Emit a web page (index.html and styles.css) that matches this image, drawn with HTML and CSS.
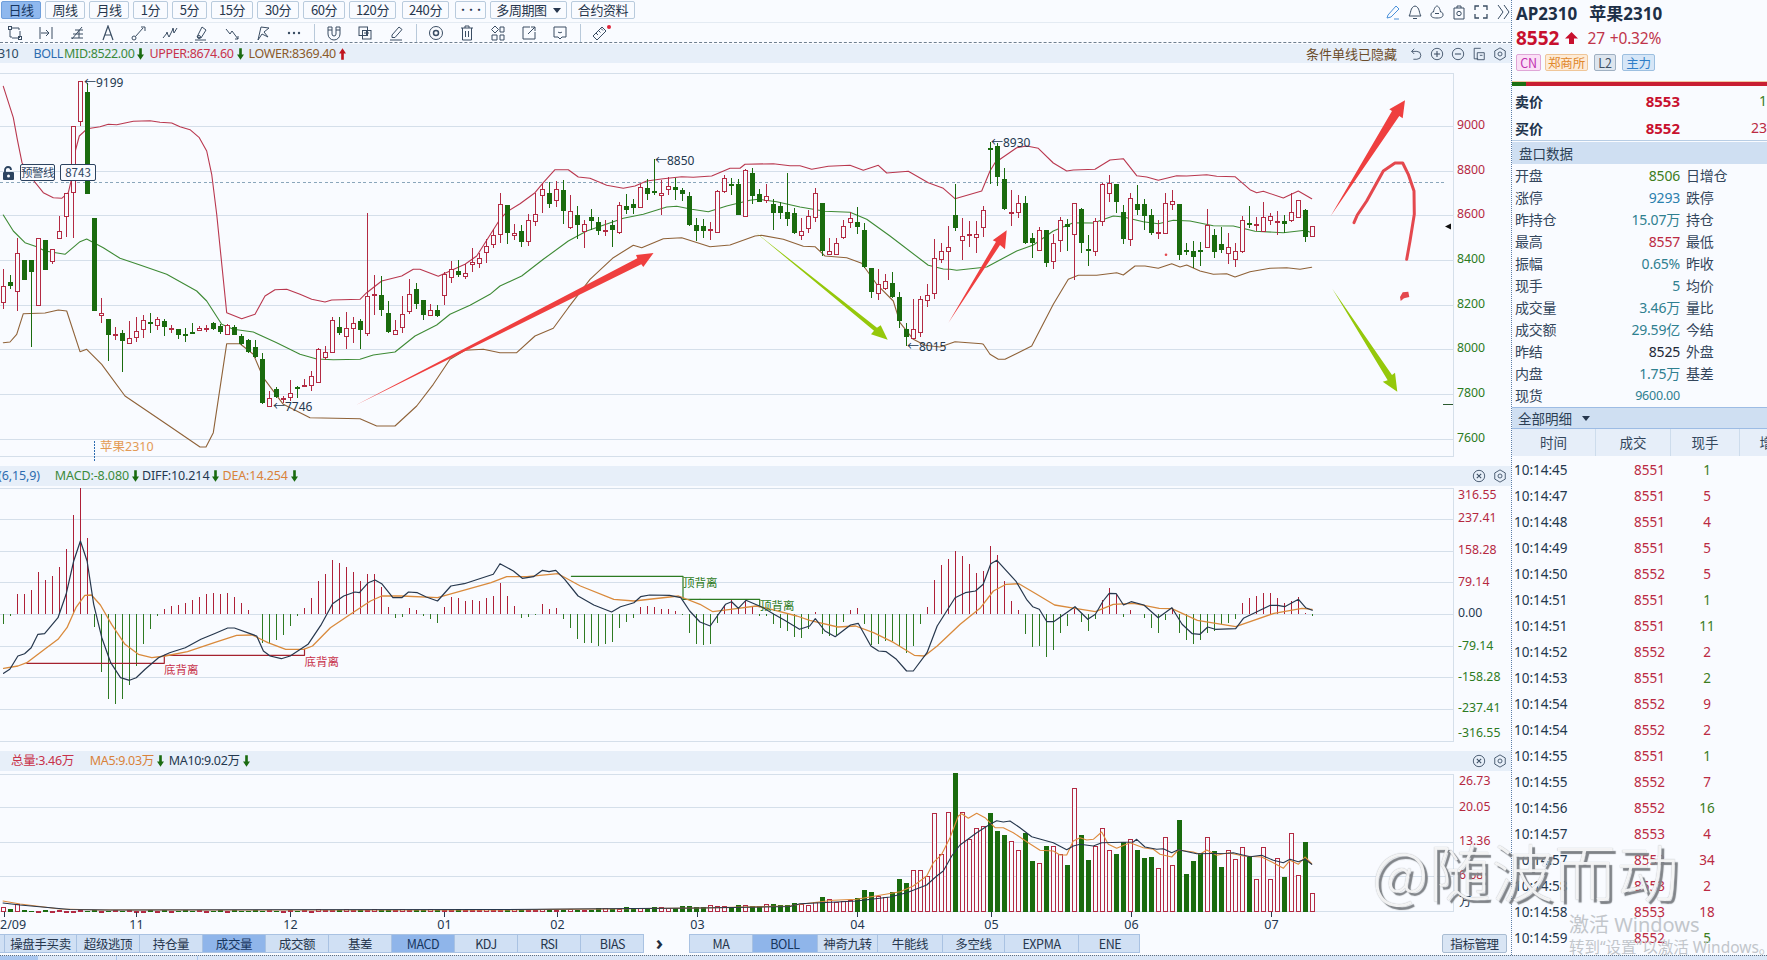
FILE: index.html
```html
<!DOCTYPE html>
<html lang="zh">
<head>
<meta charset="utf-8">
<title>AP2310 苹果2310</title>
<link rel="stylesheet" href="styles.css">
</head>
<body>
<svg class="defs" width="0" height="0">
  <symbol id="i-node" viewBox="0 0 16 16"><path d="M4 3h8v2M3 4v8h2M5 13h7l1-1V6" fill="none" stroke="currentColor"/><rect x="1.5" y="1.5" width="3" height="3" fill="none" stroke="currentColor"/><rect x="11.5" y="11.5" width="3" height="3" fill="none" stroke="currentColor"/></symbol>
  <symbol id="i-hline" viewBox="0 0 16 16"><path d="M2 2v12M14 2v12M3 8h8M8 5l3 3-3 3" fill="none" stroke="currentColor"/></symbol>
  <symbol id="i-fib" viewBox="0 0 16 16"><path d="M3 14L13 2M6 5h8M4 9h10M2 13h12M10 5v8" fill="none" stroke="currentColor"/></symbol>
  <symbol id="i-a" viewBox="0 0 16 16"><path d="M3 15L8 1l5 14M5 10h6" fill="none" stroke="currentColor" stroke-width="1.2"/></symbol>
  <symbol id="i-line" viewBox="0 0 16 16"><path d="M4.500 11.500L12 3" fill="none" stroke="currentColor"/><circle cx="3" cy="13" r="2" fill="none" stroke="currentColor"/><path d="M10 2h4v4" fill="none" stroke="currentColor"/></symbol>
  <symbol id="i-wave" viewBox="0 0 16 16"><path d="M1 13l4-5 2 4 4-8 1 4 3-5" fill="none" stroke="currentColor"/><circle cx="5" cy="8" r="1" fill="currentColor"/><circle cx="11" cy="4" r="1" fill="currentColor"/></symbol>
  <symbol id="i-brush" viewBox="0 0 16 16"><path d="M4 12L9 2l4 3-5 8zM2 15h11" fill="none" stroke="currentColor"/><circle cx="6" cy="12" r="1.500" fill="none" stroke="currentColor"/></symbol>
  <symbol id="i-zig" viewBox="0 0 16 16"><path d="M2 4l4 5 2-3 6 8M11 14h3v-3" fill="none" stroke="currentColor"/></symbol>
  <symbol id="i-flag" viewBox="0 0 16 16"><path d="M3 15L6 2l8 1-5 4 4 5-6-3z" fill="none" stroke="currentColor"/></symbol>
  <symbol id="i-dots" viewBox="0 0 16 16"><circle cx="3" cy="8" r="1.200" fill="currentColor"/><circle cx="8" cy="8" r="1.200" fill="currentColor"/><circle cx="13" cy="8" r="1.200" fill="currentColor"/></symbol>
  <symbol id="i-magnet" viewBox="0 0 16 16"><path d="M2 2h4v7a2 2 0 0 0 4 0V2h4v7a6 6 0 0 1-12 0zM2 5h4M10 5h4" fill="none" stroke="currentColor"/></symbol>
  <symbol id="i-layer" viewBox="0 0 16 16"><rect x="2" y="2" width="8.500" height="8.500" fill="none" stroke="currentColor"/><rect x="5.500" y="5.500" width="8.500" height="8.500" fill="none" stroke="currentColor"/><path d="M7 8h5M9.500 6v5" stroke="currentColor"/></symbol>
  <symbol id="i-pen" viewBox="0 0 16 16"><path d="M4 10L11 2l3 2.500-7 8H4zM2 15h12" fill="none" stroke="currentColor"/></symbol>
  <symbol id="i-eye" viewBox="0 0 16 16"><circle cx="8" cy="8" r="6.500" fill="none" stroke="currentColor"/><circle cx="8" cy="8" r="2.500" fill="none" stroke="currentColor" stroke-width="1.500"/></symbol>
  <symbol id="i-trash" viewBox="0 0 16 16"><path d="M2 3h12M6 3V1h4v2M3.500 3v12h9V3M6.500 6v6M9.500 6v6" fill="none" stroke="currentColor"/></symbol>
  <symbol id="i-grid" viewBox="0 0 16 16"><path d="M5 1l3.500 3.500L5 8 1.500 4.500zM10 2h4v5h-4zM2 10h5v5H2zM10 10h4v5h-4z" fill="none" stroke="currentColor"/></symbol>
  <symbol id="i-out" viewBox="0 0 16 16"><path d="M9 2H2v12h12V7M7 9l7-7M10 2h4v4" fill="none" stroke="currentColor"/></symbol>
  <symbol id="i-chat" viewBox="0 0 16 16"><path d="M2 2h12v10h-4l-2 2-2-2H2zM6 7c1 1 3 1 4 0" fill="none" stroke="currentColor"/></symbol>
  <symbol id="i-ruler" viewBox="0 0 16 16"><path d="M1 11L10 2l4 4-9 9zM4 8l2 2M6.500 5.500l2 2M9 3.500l2 2" fill="none" stroke="currentColor"/></symbol>
  <symbol id="i-edit" viewBox="0 0 16 16"><path d="M3 11l8-9 3 3-8 8-4 1zM9 15h5" fill="none" stroke="currentColor"/></symbol>
  <symbol id="i-bell" viewBox="0 0 16 16"><path d="M2 12c2-2 1-9 6-10 5 1 4 8 6 10zM6 14.500h4" fill="none" stroke="currentColor"/></symbol>
  <symbol id="i-cloud" viewBox="0 0 16 16"><path d="M2 11c0-3 2-3 2.500-3C5 4 7 2 8 2s3 2 3.500 6c.5 0 2.500 0 2.500 3 0 2-2 3-6 3s-6-1-6-3zM6 9.500h4" fill="none" stroke="currentColor"/></symbol>
  <symbol id="i-shot" viewBox="0 0 16 16"><path d="M3 4h10v11H3zM6 4V2h4v2" fill="none" stroke="currentColor"/><circle cx="8" cy="9.500" r="2.200" fill="none" stroke="currentColor"/></symbol>
  <symbol id="i-full" viewBox="0 0 16 16"><path d="M2 6V2h4M10 2h4v4M14 10v4h-4M6 14H2v-4" fill="none" stroke="currentColor" stroke-width="1.300"/></symbol>
  <symbol id="i-more" viewBox="0 0 16 16"><path d="M3 1l5 7-5 7M9 1l5 7-5 7" fill="none" stroke="currentColor"/></symbol>
  <symbol id="i-undo" viewBox="0 0 16 16"><path d="M6 2L3 5l3 3M3 5h6a4 4 0 0 1 0 9H5" fill="none" stroke="currentColor"/></symbol>
  <symbol id="i-plus" viewBox="0 0 16 16"><circle cx="8" cy="8" r="6.500" fill="none" stroke="currentColor"/><path d="M4.500 8h7M8 4.500v7" stroke="currentColor" stroke-width="1.200"/></symbol>
  <symbol id="i-minus" viewBox="0 0 16 16"><circle cx="8" cy="8" r="6.500" fill="none" stroke="currentColor"/><path d="M4.500 8h7" stroke="currentColor" stroke-width="1.200"/></symbol>
  <symbol id="i-copy" viewBox="0 0 16 16"><path d="M10 1.500H2.500v12H7M6 6.500h8v8H6z" fill="none" stroke="currentColor"/><path d="M9 9.500h3" stroke="currentColor"/></symbol>
  <symbol id="i-gear" viewBox="0 0 16 16"><path d="M8 1l6 3.500v7L8 15l-6-3.500v-7z" fill="none" stroke="currentColor"/><circle cx="8" cy="8" r="2.300" fill="none" stroke="currentColor"/></symbol>
  <symbol id="i-close" viewBox="0 0 16 16"><circle cx="8" cy="8" r="6.500" fill="none" stroke="currentColor"/><path d="M5.500 5.500l5 5M10.500 5.500l-5 5" stroke="currentColor" stroke-width="1.200"/></symbol>
  <symbol id="i-up" viewBox="0 0 8 13"><path d="M4 0l4 6H5.500v7h-3V6H0z" fill="currentColor"/></symbol>
  <symbol id="i-up-bold" viewBox="0 0 13 12"><path d="M6.500 0L13 6.500H9V12H4V6.500H0z" fill="currentColor"/></symbol>
  <symbol id="i-down" viewBox="0 0 8 13"><path d="M4 13L0 7h2.500V0h3v7H8z" fill="currentColor"/></symbol>
  <symbol id="i-lock" viewBox="0 0 13 14"><path d="M3 6V4a3 3 0 0 1 6 0" fill="none" stroke="currentColor" stroke-width="1.800"/><rect x="1" y="6" width="11" height="8" rx="1" fill="currentColor"/><circle cx="6.500" cy="10" r="1.500" fill="#f9fbff"/></symbol>
</svg>

<div class="app">
  <div class="main">
    <section class="left">
      <div class="periods">
        <button class="btn w41 on">日线</button>
        <button class="btn w41">周线</button>
        <button class="btn w41">月线</button>
        <button class="btn w35">1分</button>
        <button class="btn w35">5分</button>
        <button class="btn w42">15分</button>
        <button class="btn w42">30分</button>
        <button class="btn w42">60分</button>
        <button class="btn w47">120分</button>
        <button class="btn w47">240分</button>
        <button class="btn w31 strong">•••</button>
        <button class="btn w76">多周期图<span class="caret"></span></button>
        <button class="btn w64">合约资料</button>
        <div class="top-tools">
          <svg class="ic ic-blue"><use href="#i-edit"/></svg>
          <svg class="ic"><use href="#i-bell"/></svg>
          <svg class="ic"><use href="#i-cloud"/></svg>
          <svg class="ic"><use href="#i-shot"/></svg>
          <svg class="ic"><use href="#i-full"/></svg>
          <svg class="ic"><use href="#i-more"/></svg>
        </div>
      </div>
      <div class="draw-tools">
        <svg class="ic"><use href="#i-node"/></svg>
        <svg class="ic"><use href="#i-hline"/></svg>
        <svg class="ic"><use href="#i-fib"/></svg>
        <svg class="ic"><use href="#i-a"/></svg>
        <svg class="ic"><use href="#i-line"/></svg>
        <svg class="ic"><use href="#i-wave"/></svg>
        <svg class="ic"><use href="#i-brush"/></svg>
        <svg class="ic"><use href="#i-zig"/></svg>
        <svg class="ic"><use href="#i-flag"/></svg>
        <svg class="ic"><use href="#i-dots"/></svg>
        <i class="sep"></i>
        <svg class="ic"><use href="#i-magnet"/></svg>
        <svg class="ic"><use href="#i-layer"/></svg>
        <svg class="ic"><use href="#i-pen"/></svg>
        <i class="sep"></i>
        <svg class="ic"><use href="#i-eye"/></svg>
        <svg class="ic"><use href="#i-trash"/></svg>
        <svg class="ic"><use href="#i-grid"/></svg>
        <svg class="ic"><use href="#i-out"/></svg>
        <svg class="ic"><use href="#i-chat"/></svg>
        <i class="sep"></i>
        <span class="ruler"><svg class="ic"><use href="#i-ruler"/></svg><i class="red-dot"></i></span>
      </div>

      <div class="legend boll">
        <span class="c-dark clip3">310</span>
        <span class="c-blue m17">BOLL</span>
        <span class="c-green m2">MID:8522.00</span><svg class="ar c-dgreen"><use href="#i-down"/></svg>
        <span class="c-red m5">UPPER:8674.60</span><svg class="ar c-dgreen"><use href="#i-down"/></svg>
        <span class="c-brown m5">LOWER:8369.40</span><svg class="ar c-dred"><use href="#i-up"/></svg>
        <div class="legend-right">
          <span class="c-hide">条件单线已隐藏</span>
          <svg class="ic sm"><use href="#i-undo"/></svg>
          <svg class="ic sm"><use href="#i-plus"/></svg>
          <svg class="ic sm"><use href="#i-minus"/></svg>
          <svg class="ic sm"><use href="#i-copy"/></svg>
          <svg class="ic sm"><use href="#i-gear"/></svg>
        </div>
      </div>
      <div class="panel p-main">
        <svg id="priceChart" class="chart" width="1511" height="403" viewBox="0 62 1511 403"></svg>
        <div class="alert">
          <svg class="lock"><use href="#i-lock"/></svg>
          <span class="alert-box w35b">预警线</span>
          <span class="alert-box w36b">8743</span>
        </div>
      </div>

      <div class="legend macd">
        <span class="c-blue clip">(6,15,9)</span>
        <span class="c-green m15">MACD:-8.080</span><svg class="ar c-dgreen"><use href="#i-down"/></svg>
        <span class="c-navy m3">DIFF:10.214</span><svg class="ar c-dgreen"><use href="#i-down"/></svg>
        <span class="c-orange m3">DEA:14.254</span><svg class="ar c-dgreen"><use href="#i-down"/></svg>
        <div class="legend-right">
          <svg class="ic sm"><use href="#i-close"/></svg>
          <svg class="ic sm"><use href="#i-gear"/></svg>
        </div>
      </div>
      <div class="panel p-macd">
        <svg id="macdChart" class="chart" width="1511" height="265" viewBox="0 485 1511 265"></svg>
      </div>

      <div class="legend vol">
        <span class="c-red m11">总量:3.46万</span>
        <span class="c-orange m16">MA5:9.03万</span><svg class="ar c-dgreen"><use href="#i-down"/></svg>
        <span class="c-navy m4">MA10:9.02万</span><svg class="ar c-dgreen"><use href="#i-down"/></svg>
        <div class="legend-right">
          <svg class="ic sm"><use href="#i-close"/></svg>
          <svg class="ic sm"><use href="#i-gear"/></svg>
        </div>
      </div>
      <div class="panel p-vol">
        <svg id="volChart" class="chart" width="1511" height="163" viewBox="0 770 1511 163"></svg>
      </div>

      <div class="tabbar">
        <div class="tabs first">
          <span class="tab t5"></span>
          <span class="tab t72">操盘手买卖</span>
          <span class="tab t63">超级逃顶</span>
          <span class="tab t63">持仓量</span>
          <span class="tab t63 on">成交量</span>
          <span class="tab t63">成交额</span>
          <span class="tab t63">基差</span>
          <span class="tab t63 on">MACD</span>
          <span class="tab t63">KDJ</span>
          <span class="tab t63">RSI</span>
          <span class="tab t63">BIAS</span>
        </div>
        <span class="chev">›</span>
        <div class="tabs second">
          <span class="tab t63">MA</span>
          <span class="tab t65 on">BOLL</span>
          <span class="tab t60">神奇九转</span>
          <span class="tab t65">牛能线</span>
          <span class="tab t62">多空线</span>
          <span class="tab t74">EXPMA</span>
          <span class="tab t62">ENE</span>
        </div>
        <button class="btn manage">指标管理</button>
      </div>
    </section>

    <aside class="right">
      <header class="quote">
        <div class="q-name"><span>AP2310</span><span>苹果2310</span></div>
        <div class="q-price">
          <b>8552</b><svg class="q-up"><use href="#i-up-bold"/></svg><span>27</span><span>+0.32%</span>
        </div>
        <div class="q-tags">
          <span class="tag tag-pink">CN</span>
          <span class="tag tag-orange">郑商所</span>
          <span class="tag tag-grey">L2</span>
          <span class="tag tag-blue">主力</span>
        </div>
      </header>
      <div class="ratio"><i></i></div>
      <div class="bidask">
        <div class="ba"><b>卖价</b><b class="ba-p">8553</b><span class="ba-q c-tgreen">1</span></div>
        <div class="ba"><b>买价</b><b class="ba-p">8552</b><span class="ba-q c-tred">23</span></div>
      </div>
      <div class="sec-head">盘口数据</div>
      <div class="stats">
        <div class="stat"><span class="k">开盘</span><span class="v c-tgreen">8506</span><span class="k2">日增仓</span></div>
        <div class="stat"><span class="k">涨停</span><span class="v c-tblue">9293</span><span class="k2">跌停</span></div>
        <div class="stat"><span class="k">昨持仓</span><span class="v c-teal">15.07万</span><span class="k2">持仓</span></div>
        <div class="stat"><span class="k">最高</span><span class="v c-tred">8557</span><span class="k2">最低</span></div>
        <div class="stat"><span class="k">振幅</span><span class="v c-teal">0.65%</span><span class="k2">昨收</span></div>
        <div class="stat"><span class="k">现手</span><span class="v c-teal">5</span><span class="k2">均价</span></div>
        <div class="stat"><span class="k">成交量</span><span class="v c-teal">3.46万</span><span class="k2">量比</span></div>
        <div class="stat"><span class="k">成交额</span><span class="v c-teal">29.59亿</span><span class="k2">今结</span></div>
        <div class="stat"><span class="k">昨结</span><span class="v c-black">8525</span><span class="k2">外盘</span></div>
        <div class="stat"><span class="k">内盘</span><span class="v c-teal">1.75万</span><span class="k2">基差</span></div>
        <div class="stat"><span class="k">现货</span><span class="v c-teal small">9600.00</span></div>
      </div>
      <div class="detail-head">全部明细<span class="caret"></span></div>
      <div class="th">
        <span class="th1">时间</span><span class="th2">成交</span><span class="th3">现手</span><span class="th4">增仓</span>
      </div>
      <div class="ticks">
        <div class="tr"><span class="t">10:14:45</span><span class="p">8551</span><span class="q c-tgreen">1</span></div>
        <div class="tr"><span class="t">10:14:47</span><span class="p">8551</span><span class="q c-tred">5</span></div>
        <div class="tr"><span class="t">10:14:48</span><span class="p">8551</span><span class="q c-tred">4</span></div>
        <div class="tr"><span class="t">10:14:49</span><span class="p">8551</span><span class="q c-tred">5</span></div>
        <div class="tr"><span class="t">10:14:50</span><span class="p">8552</span><span class="q c-tred">5</span></div>
        <div class="tr"><span class="t">10:14:51</span><span class="p">8551</span><span class="q c-tgreen">1</span></div>
        <div class="tr"><span class="t">10:14:51</span><span class="p">8551</span><span class="q c-tgreen">11</span></div>
        <div class="tr"><span class="t">10:14:52</span><span class="p">8552</span><span class="q c-tred">2</span></div>
        <div class="tr"><span class="t">10:14:53</span><span class="p">8551</span><span class="q c-tgreen">2</span></div>
        <div class="tr"><span class="t">10:14:54</span><span class="p">8552</span><span class="q c-tred">9</span></div>
        <div class="tr"><span class="t">10:14:54</span><span class="p">8552</span><span class="q c-tred">2</span></div>
        <div class="tr"><span class="t">10:14:55</span><span class="p">8551</span><span class="q c-tgreen">1</span></div>
        <div class="tr"><span class="t">10:14:55</span><span class="p">8552</span><span class="q c-tred">7</span></div>
        <div class="tr"><span class="t">10:14:56</span><span class="p">8552</span><span class="q c-tgreen">16</span></div>
        <div class="tr"><span class="t">10:14:57</span><span class="p">8553</span><span class="q c-tred">4</span></div>
        <div class="tr"><span class="t">10:14:57</span><span class="p">8553</span><span class="q c-tred">34</span></div>
        <div class="tr"><span class="t">10:14:58</span><span class="p">8553</span><span class="q c-tred">2</span></div>
        <div class="tr"><span class="t">10:14:58</span><span class="p">8553</span><span class="q c-tred">18</span></div>
        <div class="tr"><span class="t">10:14:59</span><span class="p">8552</span><span class="q c-tgreen">5</span></div>
      </div>
    </aside>
  </div>
  <footer class="status"><i class="st-on"></i><i class="st-a"></i><i class="st-b"></i></footer>

  <div class="watermark">@随波而动</div>
  <div class="activate"><p class="a1">激活 Windows</p><p class="a2">转到“设置”以激活 Windows。</p></div>
</div>
<script src="chart.js"></script>
</body>
</html>
```

FILE: styles.css
```css
* { box-sizing: border-box; }
html, body { margin: 0; padding: 0; height: 100%; overflow: hidden; }
body {
  background: #f9fbff;
  color: #26364d;
  font-family: "Noto Sans", "Noto Sans CJK SC", "Liberation Sans", sans-serif;
  font-size: 13px;
}
.defs { position: absolute; }
.app { position: relative; width: 1767px; height: 960px; overflow: hidden; display: flex; flex-direction: column; }
.main { display: flex; height: 955px; }

/* left column */
.left { width: 1511px; flex: none; display: flex; flex-direction: column; }
.periods { height: 23px; display: flex; align-items: flex-start; padding: 1px 0 0 1px; gap: 4px; border-bottom: 1px solid #e4ebf3; }
.btn {
  height: 18px; padding: 0; border: 1px solid #b9cbdd; border-radius: 2px; background: #f9fbff;
  color: #26364d; font: 13px/16px "Noto Sans CJK SC", "Noto Sans", sans-serif; flex: none;
  display: flex; align-items: center; justify-content: center; letter-spacing: -0.4px;
}
.btn.on { background: #8fb8ee; border-color: #6f9fdc; color: #17365f; }
.btn.strong { font-size: 9px; letter-spacing: -1px; font-weight: bold; }
.w31 { width: 31px; } .w35 { width: 35px; } .w41 { width: 40px; } .w42 { width: 42px; } .w47 { width: 47px; margin-right: 2px; }
.w76 { width: 77px; } .w64 { width: 64px; }
.caret { display: inline-block; width: 0; height: 0; margin-left: 6px; border: 4px solid transparent; border-top: 5px solid #26364d; border-bottom: 0; }
.top-tools { margin-left: auto; display: flex; gap: 6px; height: 21px; align-items: center; width: 126px; }
.top-tools .ic { width: 16px; height: 16px; }
.ic { width: 16px; height: 16px; color: #3a4d63; flex: none; }
.ic-blue { color: #4a90d9; }
.ic.sm { width: 14px; height: 14px; }

.draw-tools { height: 20px; display: flex; align-items: center; padding-left: 7px; gap: 15px; border-bottom: 1px dashed #6f7f90; }
.sep { width: 1px; height: 18px; background: #b8c9da; margin: 0 -3.5px; }
.ruler { position: relative; display: flex; }
.red-dot { position: absolute; right: -3px; top: 0; width: 4px; height: 4px; border-radius: 50%; background: #e0263c; }

.legend { height: 20px; background: #e7eff9; display: flex; align-items: center; font: 12.5px/20px "Noto Sans", "Noto Sans CJK SC", sans-serif; letter-spacing: -0.35px; white-space: nowrap; overflow: hidden; }
.macd { letter-spacing: -0.12px; }
.boll { height: 19px; margin-top: 1px; }
.legend-right { margin-left: auto; display: flex; align-items: center; gap: 7px; padding-right: 4px; }
.c-hide { color: #6b4c2a; font-size: 13px; margin-right: 5px; letter-spacing: 0; }
.ar { width: 7px; height: 12px; margin-left: 3px; flex: none; }
.m2 { margin-left: 1px; } .m3 { margin-left: 3px; } .m4 { margin-left: 5px; } .m5 { margin-left: 5px; }
.m11 { margin-left: 11px; } .m15 { margin-left: 15px; } .m16 { margin-left: 16px; } .m17 { margin-left: 15px; }
.clip { margin-left: -2px; }
.clip3 { margin-left: -2px; }
.c-dark { color: #2d4a62; }
.c-blue { color: #2d6cb0; }
.c-green { color: #3b8a3b; }
.c-dgreen { color: #1a6b10; }
.c-dred { color: #c0141e; }
.c-red { color: #c8324a; }
.c-brown { color: #8a5a2a; }
.c-navy { color: #24384f; }
.c-orange { color: #d9823a; }

.panel { position: relative; }
.p-main { height: 403px; } .p-macd { height: 265px; } .p-vol { height: 163px; }
.chart { display: block; font-family: "Noto Sans", "Noto Sans CJK SC", sans-serif; }
.grid { stroke: #d5dfea; stroke-width: 1; }
.axis-r { fill: #b5283f; font-size: 12.3px; }
.axis-g { fill: #2c7a22; font-size: 12.3px; }
.axis-d { fill: #24384f; font-size: 12.3px; }
.time { fill: #24384f; font-size: 12.5px; }
.ext { fill: #24384f; font-size: 12px; }
.name { fill: #e39a55; font-size: 12.5px; }
.div-r { fill: #c8324a; font-size: 11.5px; }
.div-g { fill: #2c7a22; font-size: 11.5px; }
.crisp { shape-rendering: crispEdges; }

.alert { position: absolute; left: 2px; top: 101px; display: flex; align-items: center; gap: 5px; }
.lock { width: 13px; height: 14px; color: #2c4360; }
.alert-box { height: 17px; border: 1px solid #2c4360; border-radius: 2px; background: #f9fbff; font: 11.5px/15px "Noto Sans CJK SC", "Noto Sans", sans-serif; color: #2c4360; text-align: center; letter-spacing: -0.5px; white-space: nowrap; }
.w35b { width: 35px; } .w36b { width: 36px; letter-spacing: 0; }

.tabbar { height: 19px; display: flex; align-items: stretch; }
.tabs { display: flex; border: 1px solid #a9c2e2; border-left: 0; background: #d0e0f4; }
.first { width: 644px; }
.second { width: 451px; border-left: 1px solid #a9c2e2; }
.tab { display: flex; align-items: center; justify-content: center; border-right: 1px solid #a9c2e2; font: 12.5px/17px "Noto Sans CJK SC", "Noto Sans", sans-serif; letter-spacing: -0.4px; color: #26364d; flex: none; }
.tab:last-child { border-right: 0; }
.tab.on { background: #8fb5ea; color: #17365f; }
.t5 { width: 5px; } .t60 { width: 60px; } .t62 { width: 62px; } .t63 { width: 63px; } .t65 { width: 65px; } .t72 { width: 72px; } .t74 { width: 74px; }
.chev { width: 45px; text-align: center; padding-right: 14px; font: bold 20px/17px "Noto Sans", sans-serif; color: #1f2d3f; }
.manage { margin-left: 302px; width: 65px; height: 19px; background: #d9e5f4; border-color: #a9bcd2; font-size: 12.5px; }

/* right column */
.right { width: 256px; flex: none; border-left: 1px dotted #5b7ea8; overflow: hidden; }
.quote { height: 82px; padding: 2px 0 0 4px; border-bottom: 1px solid #f2c7a0; }
.q-name { display: flex; gap: 12px; font: bold 17px/23px "Noto Sans", "Noto Sans CJK SC", sans-serif; color: #1d2f47; }
.q-price { display: flex; align-items: center; height: 25px; color: #c0344a; font-size: 15.5px; }
.q-price b { color: #c8102e; font-size: 19px; }
.q-price span { margin-left: 5px; letter-spacing: -.2px; }
.q-up { width: 13px; height: 12px; margin-left: 6px; color: #c8102e; }
.q-price span:first-of-type { margin-left: 9px; }
.q-tags { display: flex; gap: 4px; margin-top: 4px; }
.tag { height: 17px; font: 12.5px/15px "Noto Sans CJK SC", "Noto Sans", sans-serif; text-align: center; border: 1px solid; border-radius: 2px; flex: none; letter-spacing: -.2px; }
.tag-pink { width: 25px; color: #c02fb0; background: #fbe0f6; border-color: #dfa6d7; }
.tag-orange { width: 43px; color: #e0872a; background: #fdebd7; border-color: #efc699; }
.tag-grey { width: 22px; color: #3f5165; background: #dde5ee; border-color: #9fb0c2; margin-left: 2px; }
.tag-blue { width: 33px; color: #2e7dc8; background: #d6e6f7; border-color: #9cbfe0; margin-left: 2px; }
.ratio { height: 4px; background: #c81e32; }
.ratio i { display: block; width: 14px; height: 4px; background: #1d6f12; }
.bidask { height: 55px; padding-top: 1px; border-bottom: 1px solid #b8cde4; margin-bottom: 1px; }
.ba { height: 27px; display: flex; align-items: center; padding-left: 3px; position: relative; white-space: nowrap; }
.ba b { font-size: 14px; color: #20324a; }
.ba .ba-p { color: #c8102e; width: 121px; text-align: right; font-size: 15px; margin-left: 16px; }
.ba-q { position: absolute; right: 0; font-size: 14px; }
.sec-head { height: 22px; background: #cfdff2; padding-left: 7px; font: 13.5px/22px "Noto Sans CJK SC", sans-serif; color: #2c3f55; }
.stats { padding-top: 1px; height: 243px; }
.stat { height: 22px; display: flex; align-items: center; font: 14px/22px "Noto Sans", "Noto Sans CJK SC", sans-serif; letter-spacing: -.2px; }
.k { width: 55px; padding-left: 3px; color: #33465c; flex: none; white-space: nowrap; }
.v { width: 113px; text-align: right; flex: none; white-space: nowrap; }
.k2 { margin-left: 6px; color: #33465c; white-space: nowrap; }
.small { font-size: 12.5px; }
.c-tgreen { color: #3d7d1d; } .c-tblue { color: #2a80ad; } .c-teal { color: #2f8090; } .c-tred { color: #bb2a42; } .c-black { color: #1c2836; }
.detail-head { height: 22px; background: #cfdff2; border-top: 1px solid #9dbce4; border-bottom: 1px solid #9dbce4; padding-left: 6px; display: flex; align-items: center; font: 13.5px/20px "Noto Sans CJK SC", sans-serif; color: #2c3f55; }
.detail-head .caret { margin-left: 10px; }
.th { height: 27px; background: #e6eef9; display: flex; align-items: center; white-space: nowrap; font: 13.5px/27px "Noto Sans CJK SC", sans-serif; color: #33465c; }
.th span { border-right: 1px solid #cddcec; height: 27px; text-align: center; flex: none; }
.th1 { width: 84px; } .th2 { width: 75px; } .th3 { width: 69px; } .th4 { width: 66px; border-right: 0 !important; }
.ticks { height: 494px; padding-top: 1px; }
.tr { height: 26px; display: flex; align-items: center; font: 13.5px/26px "Noto Sans", sans-serif; }
.t { width: 104px; padding-left: 2px; color: #24384f; flex: none; }
.p { width: 67px; text-align: center; color: #bb2a42; flex: none; }
.q { width: 48px; text-align: center; flex: none; }

.status { height: 5px; border-top: 1px dotted #5f6f80; display: flex; background: #dbe7f7; position: relative; z-index: 1; }
.st-on { width: 38px; background: #a9c6ee; }
.st-a { width: 79px; border-right: 1px solid #a9c6ee; }
.st-b { width: 81px; border-right: 1px solid #a9c6ee; }

.watermark {
  position: absolute; left: 1372px; top: 832px;
  font: 300 62px/76px "Noto Sans CJK SC", sans-serif; letter-spacing: .5px; white-space: nowrap;
  color: rgba(255,255,255,.88); text-shadow: 3px 3px 1px #7f8388, 0 0 1px #9a9ea3; pointer-events: none;
}
.activate { position: absolute; left: 1569px; top: 912px; color: #c2c6cb; pointer-events: none; white-space: nowrap; }
.a1, .a2 { margin: 0; font-family: "Noto Sans", "Noto Sans CJK SC", sans-serif; }
.a1 { font-size: 20px; line-height: 26px; }
.a2 { font-size: 15.5px; line-height: 19px; }
```

FILE: chart.js
```js
(function () {
  var RED = '#b32a43', GREEN = '#1a6b0e', BG = '#f9fbff';
  var cx = function (i) { return 3.5 + 7 * i; };
  /* coordinate frames of the sampled series */
  var F6 = [0, 60, 3, 3], F7 = [500, 130, 3, 3], F8 = [950, 90, 3, 3],
      F9 = [0, 460, 2.24, 3], F10 = [700, 460, 1.96, 3], F11 = [800, 770, 3, 3];
  function conv(f, a) {
    var o = [];
    for (var i = 0; i < a.length; i += 2) o.push([(f[0] + a[i] / f[2]).toFixed(1), (f[1] + a[i + 1] / f[3]).toFixed(1)]);
    return o;
  }
  function pl(pts, color, w) {
    return '<polyline fill="none" stroke="' + color + '" stroke-width="' + (w || 1) + '" stroke-linejoin="round" stroke-linecap="round" points="' + pts.map(function (p) { return p.join(','); }).join(' ') + '"/>';
  }
  function poly(f, a, color) {
    return '<polygon fill="' + color + '" points="' + conv(f, a).map(function (p) { return p.join(','); }).join(' ') + '"/>';
  }
  function text(x, y, s, cls, anchor) {
    return '<text x="' + x + '" y="' + (y - 1.5) + '" class="' + cls + '" dominant-baseline="central"' + (anchor ? ' text-anchor="' + anchor + '"' : '') + '>' + s + '</text>';
  }
  function hline(y, x1, x2, cls) { return '<line class="' + (cls || 'grid') + ' crisp" x1="' + (x1 || 0) + '" x2="' + (x2 || 1453) + '" y1="' + y + '" y2="' + y + '"/>'; }

  /* ---------- candles: colour, high, body top, body bottom, low ---------- */
  var s6 = 'r 625 676 725 745;g 642 663 675 683;r 532 577 692 750;g 597 597 657 657;g 597 597 633 858;r 532 532 734 734;g 537 537 627 627;r 565 565 600 608;r 465 511 533 533;r 397 397 467 528;r 196 196 395 532;r 61 61 182 195;g 65 93 398 398;g 471 471 750 750;r 712 757 764 785;g 773 773 822 900;r 798 820 824 838;g 808 816 840 932;r 780 832 847 850;r 767 811 828 842;r 762 777 803 830;g 757 783 788 815;r 768 775 794 806;g 775 780 797 825;r 793 801 804 815;g 803 803 822 833;g 800 818 820 842;g 786 812 815 815;r 795 801 806 810;r 792 800 803 812;g 783 785 803 807;g 790 795 813 820;r 788 793 821 821;g 793 799 822 822;g 820 825 850 853;g 835 838 873 876;g 838 858 887 890;g 877 895 1028 1028;r 990 1012 1037 1037;g 978 985 1008 1012;r 1005 1012 1015 1025;r 957 995 1008 1020;g 975 977 979 1012;r 955 971 974 978;r 930 946 974 990;r 860 865 965 965;r 855 872 888 898;r 768 778 875 875;g 768 798 816 822;r 753 802 827 863;r 768 787 803 845;g 775 781 808 863;r 456 705 815 824;r 642 700 704 762;g 645 703 747 765;g 720 757 815 815;r 778 808 820 820;r 705 760 800 815;r 655 700 752 760;g 667 685 731 745;g 718 718 762 778;r 730 748 764 766;g 733 748 767 767;r 632 640 703 732;r 600 623 647 665;g 598 631 642 648;r 610 637 647 655;r 562 604 611 632;r 575 592 608 620;r 535 556 574 605;r 503 523 551 562';
  var s7 = 'r 187 218 308 336;g 222 222 306 338;r 278 306 311 328;g 282 300 333 348;r 248 268 332 345;r 185 248 270 285;r 155 175 193 245;g 153 186 218 230;r 150 175 208 228;g 148 178 240 278;r 193 241 288 293;g 225 252 282 325;r 268 280 302 350;g 235 259 270 298;g 258 273 300 312;r 268 297 301 315;g 267 282 297 348;r 212 222 303 308;g 190 225 237 250;g 205 218 231 250;r 160 168 227 227;g 145 171 189 207;g 85 181 186 193;r 148 187 193 252;r 138 165 173 192;g 142 168 176 208;g 170 176 188 210;g 184 194 282 285;g 262 282 300 330;g 265 285 300 322;r 272 294 297 326;r 178 180 302 302;r 133 141 180 185;g 140 158 160 192;g 143 158 252 252;r 115 117 254 254;g 112 126 195 218;g 175 189 212 214;r 160 196 208 215;g 203 220 248 296;g 212 225 246 265;g 126 243 263 285;g 230 246 306 308;r 262 301 314 326;r 238 256 293 305;r 172 187 260 273;g 215 216 360 374;r 322 361 371 372;r 320 337 371 371;r 268 286 320 325;r 243 262 275 290;g 229 273 288 310;g 275 297 408 410;g 411 411 482 500;r 415 460 488 508;r 430 451 473 477;g 423 457 500 502;g 482 498 569 592;g 577 594 617 645;r 503 595 622 624;r 495 505 604 617;r 460 492 506 528;r 323 382 488 505;r 335 361 384 396;r 285 349 361 446;g 160 252 291 300;r 260 314 326 387;r 270 310 313 348;r 270 310 319 367;r 224 238 289 318';
  var s8 = 'g 153 172 176 280;g 155 165 258 284;g 232 265 354 358;r 297 364 368 405;r 312 336 362 380;g 315 336 457 460;g 425 442 458 500;r 408 417 476 477;g 417 417 516 528;r 430 457 510 533;r 377 388 449 482;g 383 400 408 480;r 335 336 428 566;g 350 354 456 485;g 432 475 482 524;r 380 391 482 495;r 275 279 390 404;r 252 277 308 332;g 278 279 333 366;g 343 363 443 458;r 307 321 443 465;g 282 339 357 372;g 325 339 374 417;g 355 372 427 432;r 387 422 426 443;r 307 336 426 428;r 297 331 339 356;g 339 339 492 508;g 457 477 483 493;g 450 480 498 530;g 453 478 482 525;r 354 403 470 472;g 415 432 483 500;g 408 460 478 487;r 427 468 487 520;r 457 481 506 527;r 376 388 480 485;g 346 396 401 412;r 378 399 401 420;r 334 379 420 420;r 365 376 388 401;r 360 391 395 433;g 372 391 401 425;r 307 362 386 392;r 326 327 379 380;g 355 356 437 452;r 405 406 436 437';
  var candles = [];
  [[s6, 60], [s7, 130], [s8, 90]].forEach(function (seg) {
    seg[0].split(';').forEach(function (c) {
      var p = c.split(' ');
      candles.push({ c: p[0], h: seg[1] + p[1] / 3, t: seg[1] + p[2] / 3, b: seg[1] + p[3] / 3, l: seg[1] + p[4] / 3 });
    });
  });

  /* ---------- price panel ---------- */
  var upper = conv(F6, [10,76,40,170,52,235,66,305,90,345,130,395,160,410,185,412,205,395,218,340,226,270,238,225,262,203,300,197,325,190,350,191,400,181,450,179,480,184,515,186,540,197,570,206,598,230,620,270,635,340,650,460,680,755,725,773,765,760,795,705,825,686,860,685,900,700,935,715,975,723,995,717,1080,715,1100,695,1145,660,1205,645,1240,625,1260,625,1315,646,1395,610,1430,585])
    .concat(conv(F7, [0,265,20,243,60,218,105,185,130,155,165,116,205,116,235,138,270,142,320,163,370,172,405,165,440,150,490,143,545,137,580,139,635,135,690,112,720,112,735,100,820,98,870,104,900,104,935,115,985,106,1050,103,1090,118,1135,103,1160,126,1225,121,1285,155,1330,172,1365,203,1445,180]))
    .concat(conv(F8, [120,240,135,215,200,170,230,165,265,172,310,216,350,240,370,237,435,235,480,207,520,203,560,254,590,258,625,268,680,254,710,255,770,251,800,256,855,257,900,296,920,305,940,301,1000,321,1045,300,1085,323]));
  var mid = conv(F6, [10,462,40,510,75,545,110,557,135,570,195,580,240,542,260,534,310,560,360,592,420,612,500,640,590,690,620,720,665,790,700,805,760,813,830,845,900,880,950,894,1000,896,1080,895,1120,882,1185,873,1245,825,1310,792,1350,760,1410,733,1470,700])
    .concat(conv(F7, [0,465,65,435,130,385,205,330,260,300,370,262,430,250,500,228,530,226,575,235,625,242,680,225,750,208,775,205,830,212,900,228,975,241,1050,244,1100,265,1170,315,1285,403,1330,414]))
    .concat(conv(F8, [0,535,20,538,110,528,200,480,250,462,310,420,370,395,430,396,490,375,520,378,580,392,625,398,670,388,720,390,790,404,850,405,915,421,1000,425,1065,418,1085,425]));
  var lower = conv(F6, [10,845,30,843,50,820,70,758,135,756,175,747,200,750,240,872,260,865,305,910,375,1005,500,1090,600,1158,618,1158,640,1115,680,848,720,848,760,880,790,950,850,1030,930,1070,1080,1073,1130,1095,1185,1095,1250,1035,1300,970,1350,895,1395,868,1450,865])
    .concat(conv(F7, [0,665,50,665,105,615,160,592,205,530,270,445,340,380,400,343,425,350,490,323,545,320,630,347,690,342,765,315,785,313,850,325,910,346,945,347,975,375,1040,380,1085,397,1130,460,1180,510,1200,575,1240,625,1275,643,1320,648,1365,632,1445,638]))
    .concat(conv(F8, [100,760,120,790,145,805,165,805,245,765,310,640,355,565,385,553,440,553,500,545,520,552,555,525,585,525,625,532,665,518,690,528,710,522,750,540,790,550,830,548,855,558,900,542,960,532,1010,530,1050,535,1085,529]));

  var h = '';
  [72.5, 125.5, 170.5, 214.5, 259.5, 304.5, 348.5, 393.5, 438.5, 455.5].forEach(function (y) { h += hline(y); });
  h += '<line class="grid crisp" x1="1453.5" x2="1453.5" y1="72" y2="456"/>';
  h += '<line stroke="#8aa6bb" stroke-dasharray="3 2.5" class="crisp" x1="0" x2="1444" y1="181.5" y2="181.5"/>';
  h += pl(upper, '#b9374e', 1.1) + pl(mid, '#3e8a35', 1.1) + pl(lower, '#8f6238', 1.1);

  var g = '<g class="crisp">';
  candles.forEach(function (c, i) {
    var x = cx(i), col = c.c === 'r' ? RED : GREEN;
    g += '<line stroke="' + col + '" x1="' + x + '" x2="' + x + '" y1="' + c.h.toFixed(1) + '" y2="' + c.l.toFixed(1) + '"/>';
    var top = Math.round(c.t), ht = Math.max(Math.round(c.b - c.t), 1);
    if (c.c === 'r') g += '<rect fill="' + BG + '" stroke="' + col + '" x="' + (x - 2) + '" y="' + (top + .5) + '" width="4" height="' + ht + '"/>';
    else g += '<rect fill="' + col + '" x="' + (x - 2.5) + '" y="' + top + '" width="5" height="' + Math.max(ht, 2) + '"/>';
  });
  h += g + '</g>';

  /* overlay: drawn annotations */
  var ARED = '#ef3f3f', AGRN = '#95c80b';
  h += '<polygon fill="' + ARED + '" points="356,404 637.3,257.3 636,254 653.5,252 643.3,266 641.3,263.3"/>';
  h += poly(F7, [765,303,1131,590,1142,583,1163,626,1113,610,1122,599], AGRN);
  h += poly(F8, [-5,696,138,452,128,448,170,418,165,475,150,462], ARED);
  h += poly(F8, [1142,375,1326,60,1318,55,1365,28,1358,82,1348,75], ARED);
  h += poly(F8, [1147,593,1313,868,1298,872,1342,902,1335,845,1326,852], AGRN);
  h += pl(conv(F8, [1212,395,1222,372,1250,330,1300,240,1335,216,1358,216,1375,250,1392,300,1393,370,1380,450,1370,505]), '#e4484e', 3);
  h += poly(F8, [1350,618,1358,604,1375,602,1378,618,1362,622,1352,630], '#e4484e');
  h += '<circle cx="1166" cy="253.7" r="1.3" fill="#e4484e"/>';

  /* extreme labels */
  [[84, 83, '←9199'], [655, 161, '←8850'], [273, 407, '←7746'], [907, 347, '←8015'], [991, 143, '←8930']].forEach(function (e) { h += text(e[0], e[1], e[2], 'ext'); });
  h += '<line stroke="#2d6cb0" stroke-dasharray="2 1" x1="94.5" x2="94.5" y1="440" y2="460"/>';
  h += text(100, 447, '苹果2310', 'name');

  /* axis */
  [[125, '9000', 'r'], [170, '8800', 'r'], [214, '8600', 'r'], [259, '8400', 'g'], [304, '8200', 'g'], [348, '8000', 'g'], [393, '7800', 'g'], [438, '7600', 'g']].forEach(function (a) {
    h += text(1457, a[0], a[1], 'axis-' + a[2]);
  });
  h += '<polygon fill="#111" points="1445,225.500 1451,222.500 1451,228.500"/>';
  h += '<line stroke="#2c5a30" class="crisp" x1="1443" x2="1453" y1="403.5" y2="403.5"/>';
  document.getElementById('priceChart').innerHTML = h;

  /* ---------- MACD panel ---------- */
  var bars = [488,465,400,400,388,333,357,345,318,265,162,82,232,498,632,713,728,713,672,615,550,503,464,445,435,432,426,417,407,398,396,398,396,407,427,448,460,545,545,537,523,495,464,441,410,360,340,298,306,318,333,360,340,340,378,438,470,467,441,447,465,473,485,438,407,411,420,417,420,410,405,367,405,435,470,468,463,430,443,441,473,500,533,545,545,555,550,543,500,483,470,438,436,438,445,445,450,463,515,548,
    553,549,485,433,418,440,420,435,465,465,490,500,510,527,530,505,453,520,525,522,483,447,441,490,552,550,540,540,555,575,555,488,437,357,312,293,270,285,308,335,330,255,282,360,420,447,518,557,555,587,567,515,495,445,483,510,475,418,381,400,467,447,458,470,500,515,477,440,515,538,548,537,515,510,490,485,475,427,411,405,396,396,411,427,420,408,457,465];
  var diff = conv(F9, [8,637,22,625,40,585,55,578,70,560,85,520,100,518,130,470,148,400,165,300,180,240,195,300,210,430,228,530,248,605,270,650,290,658,305,650,325,625,355,590,380,575,415,560,450,535,480,518,510,501,525,501,575,525,590,570,605,585,630,593,650,585,690,550,720,490,745,428,770,405,795,393,805,395,825,365,840,357,855,368,880,410,900,410,915,393,935,395,955,408,980,420,1010,375,1040,368,1105,340,1120,308,1150,330,1170,352,1195,347,1215,328,1230,332,1245,328,1265,355,1295,405,1330,432,1370,453,1390,437,1420,425,1435,407,1455,402,1500,403,1525,410,1545,450,1568,483])
    .concat(conv(F10, [20,495,50,430,62,422,75,442,90,418,120,437,145,460,165,477,195,505,215,495,226,473,245,510,265,527,295,492,310,487,335,555,350,570,365,572,385,595,405,630,418,630,445,575,465,495,500,410,520,395,540,390,555,370,570,308,582,298,620,362,640,415,652,437,665,445,680,482,693,482,735,437,760,475,775,460,790,420,802,397,816,398,830,432,845,422,870,432,898,470,925,440,945,490,965,518,980,520,995,498,1010,505,1050,503,1065,472,1118,433,1132,433,1146,437,1173,415,1187,440,1200,448]));
  var dea = conv(F9, [8,622,40,615,60,605,100,565,130,535,150,500,170,440,190,403,205,402,225,432,250,490,280,550,310,580,340,590,370,585,420,572,480,545,530,523,565,522,600,545,640,565,680,565,700,555,740,500,790,455,830,420,855,405,900,405,980,410,1100,365,1135,347,1180,347,1250,338,1300,375,1375,415,1420,420,1520,405,1568,430])
    .concat(conv(F10, [25,452,60,445,110,435,140,445,190,465,215,478,270,498,305,495,340,515,380,545,420,583,440,585,465,555,510,490,550,440,575,390,600,370,625,368,660,400,695,432,735,442,775,452,810,430,850,427,900,442,925,443,975,478,1050,497,1125,457,1180,442,1200,445]));

  var m = '';
  [487.5, 518.5, 550.5, 581.5, 613.5, 645.5, 676.5, 708.5, 740.5].forEach(function (y) { m += hline(y); });
  m += '<line class="grid crisp" x1="1453.5" x2="1453.5" y1="487" y2="741"/>';
  m += '<g class="crisp">';
  bars.forEach(function (b, i) {
    var y = 460 + b / 3, x = cx(i);
    if (b === 460) return;
    m += '<line stroke="' + (b < 460 ? '#ae2038' : '#2e7a22') + '" x1="' + x + '" x2="' + x + '" y1="' + y.toFixed(1) + '" y2="613.3"/>';
  });
  m += '</g>';
  /* divergence markers */
  m += pl(conv(F9, [60,607,368,607,368,585]), '#a5222e', 1.2) + pl(conv(F9, [368,583,682,583,682,565]), '#a5222e', 1.2);
  m += pl(conv(F9, [1280,346,1530,346,1530,415,1568,415]), '#2c7a22', 1.2);
  m += pl(conv(F10, [0,415,117,415,117,437]), '#2c7a22', 1.2);
  m += pl(dea, '#d98a3c', 1.3) + pl(diff, '#26374d', 1.2);
  m += text(164, 670, '底背离', 'div-r') + text(304.5, 662, '底背离', 'div-r') + text(683, 583, '顶背离', 'div-g') + text(760, 606, '顶背离', 'div-g');
  [[495, '316.55', 'r'], [518, '237.41', 'r'], [550, '158.28', 'r'], [582, '79.14', 'r'], [613, '0.00', 'd'], [646, '-79.14', 'g'], [677, '-158.28', 'g'], [708, '-237.41', 'g'], [733, '-316.55', 'g']].forEach(function (a) {
    m += text(1458, a[0], a[1], 'axis-' + a[2]);
  });
  document.getElementById('macdChart').innerHTML = m;

  /* ---------- volume panel ---------- */
  var tail = [398,402,392,378,385,393,390,388,381,357,363,375,378,363,324,336,298,298,316,127,250,124,6,124,205,172,166,126,180,192,211,238,186,270,277,225,226,250,282,52,192,267,226,170,238,249,214,205,237,261,258,292,199,283,147,309,270,247,199,240,288,238,265,229,258,325,229,325,262,318,187,313,213,367];
  var ma5 = [[3,900],[20,903],[60,908],[100,909],[500,909],[700,907],[790,905]].concat(conv(F11, [0,400,100,388,170,385,300,362,340,345,380,315,400,275,425,250,450,200,475,135,485,128,505,142,530,127,555,140,585,170,610,170,640,185,680,212,720,238,760,240,780,252,800,252,820,210,840,200,860,207,880,205,905,183,925,220,950,232,990,215,1030,230,1060,235,1080,250,1115,258,1135,237,1180,243,1200,250,1220,237,1250,253,1285,245,1330,255,1385,258,1420,275,1450,292,1470,268,1495,280,1515,258,1535,278]));
  var ma10 = [[3,902],[20,904],[70,908.5],[110,909],[500,908.5],[700,907],[790,905.5]].concat(conv(F11, [0,398,110,393,170,390,270,378,320,365,380,342,410,315,430,300,455,255,480,222,530,185,570,160,590,149,610,153,630,150,660,170,695,197,760,215,800,236,820,225,840,220,880,225,905,215,1000,213,1010,205,1035,228,1070,235,1090,233,1115,245,1135,236,1190,248,1285,247,1300,245,1350,257,1385,253,1420,268,1450,275,1470,265,1495,272,1515,265,1535,280]));
  var v = '';
  [773.5, 806.5, 841.5, 875.5, 910.5].forEach(function (y) { v += hline(y); });
  v += '<line class="grid crisp" x1="1453.5" x2="1453.5" y1="773" y2="911"/>';
  v += '<g class="crisp">';
  var base = 911;
  candles.forEach(function (c, i) {
    var ht;
    if (i >= 114) ht = base - (770 + tail[i - 114] / 3);
    else if (i < 3) ht = [5, 3, 8][i];
    else if (i < 45) ht = 1 + (i * 13 % 5 > 2 ? 1 : 0);
    else if (i < 85) ht = 2 + (i * 7 % 4 > 2 ? 1 : 0);
    else ht = 2 + (i - 85) / 6 + (i * 11 % 4) * .7;
    ht = Math.max(Math.round(ht), 1);
    var y = base - ht, x = cx(i);
    if (c.c === 'r') v += '<rect fill="' + BG + '" stroke="' + RED + '" x="' + (x - 2) + '" y="' + (y + .5) + '" width="4" height="' + (ht - 1 < 1 ? 1 : ht - 1) + '"/>';
    else v += '<rect fill="' + GREEN + '" x="' + (x - 2.5) + '" y="' + y + '" width="5" height="' + ht + '"/>';
  });
  v += '</g>';
  v += pl(ma5, '#dd8a3c', 1.1) + pl(ma10, '#26374d', 1.1);
  [[3.5, '2/09', 0], [136, '11'], [290, '12'], [444, '01'], [556.5, '02'], [696.5, '03'], [857, '04'], [990.5, '05'], [1130.5, '06'], [1270.5, '07']].forEach(function (t) {
    var tx = Math.round(t[0]) + .5;
    v += '<line class="crisp" stroke="#26374d" x1="' + tx + '" x2="' + tx + '" y1="911" y2="916"/>';
    v += text(t[2] === 0 ? 0 : tx, 925, t[1], 'time', t[2] === 0 ? 'start' : 'middle');
  });
  [[781, '26.73', 'r'], [807, '20.05', 'r'], [841, '13.36', 'r'], [875, '6.68', 'r']].forEach(function (a) {
    v += text(1459, a[0], a[1], 'axis-' + a[2]);
  });
  v += text(1459, 902, '万', 'axis-d');
  document.getElementById('volChart').innerHTML = v;
})();
```
